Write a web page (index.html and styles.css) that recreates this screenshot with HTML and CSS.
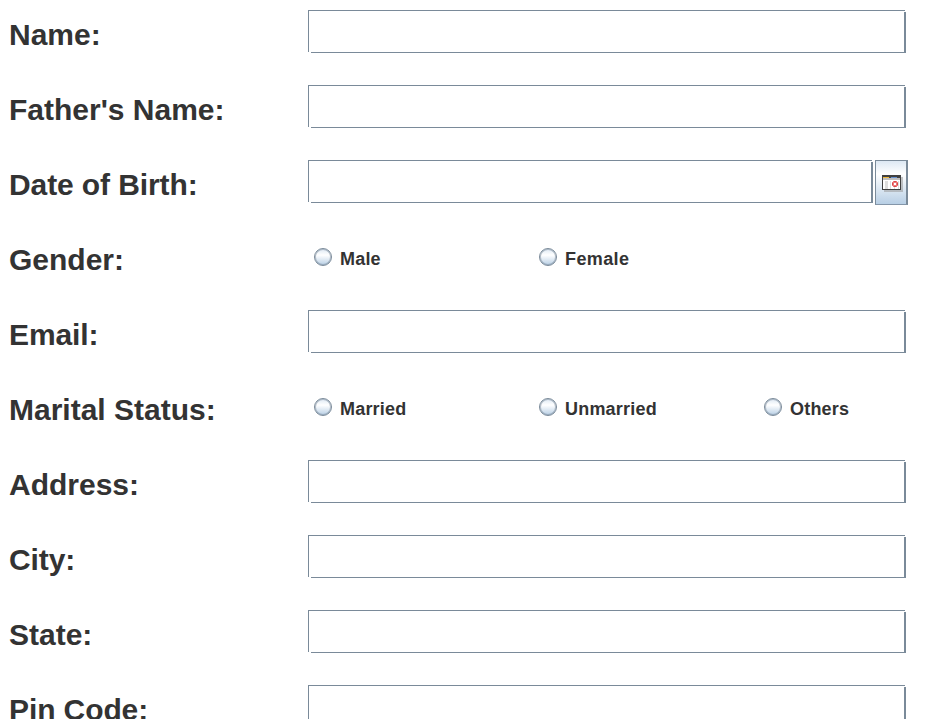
FILE: index.html
```
<!DOCTYPE html>
<html lang="en">
<head>
<meta charset="utf-8">
<title>Form</title>
<link rel="stylesheet" href="styles.css">
</head>
<body>
<form class="form">
<div class="row"><span class="label">Name:</span><div class="field"></div></div>
<div class="row"><span class="label">Father's Name:</span><div class="field"></div></div>
<div class="row"><span class="label tight">Date of Birth:</span><div class="field date"></div>
<button type="button" class="calendar" aria-label="Choose date"><svg width="21" height="17" viewBox="0 0 21 17" shape-rendering="crispEdges"><path d="M2 2H21V17H2Z" fill="#999" opacity=".55"/><path d="M0 0H19V15H0Z" fill="#404040"/><path d="M1 2H18V14H1Z" fill="#fff"/><path d="M1 2H7V3H1Z" fill="#eeb83c"/><path d="M9 2H15V3H9Z" fill="#628ed0"/><path d="M7 2H9V3H7ZM15 2H18V3H15Z" fill="#444"/><path d="M1 3H18V5H1Z" fill="#bebebe"/><path d="M3 6H6V14H3ZM8 6H9V14H8ZM12 6H13V14H12ZM16 6H17V14H16Z" fill="#dedede"/><path d="M11 6H15V7H16V11H15V12H11V11H10V7H11Z" fill="#f07878"/><path d="M12 8H14V10H12Z" fill="#fff"/><path d="M10 8H11V10H10ZM15 8H16V10H15ZM12 6H14V7H12ZM12 11H14V12H12Z" fill="#d94848"/></svg></button></div>
<div class="row"><span class="label">Gender:</span><div class="options"><label class="option"><i class="radio"></i>Male</label><label class="option wide"><i class="radio"></i>Female</label></div></div>
<div class="row"><span class="label tight">Email:</span><div class="field"></div></div>
<div class="row"><span class="label">Marital Status:</span><div class="options"><label class="option"><i class="radio"></i>Married</label><label class="option"><i class="radio"></i>Unmarried</label><label class="option"><i class="radio"></i>Others</label></div></div>
<div class="row"><span class="label">Address:</span><div class="field"></div></div>
<div class="row"><span class="label tight">City:</span><div class="field"></div></div>
<div class="row"><span class="label">State:</span><div class="field"></div></div>
<div class="row"><span class="label tight">Pin Code:</span><div class="field"></div></div>
</form>
</body>
</html>
```
FILE: styles.css
```
* { box-sizing: border-box; }
body { margin: 0; background: #fff; color: #333; font-family: "Liberation Sans", Arial, sans-serif; font-weight: bold; }
.form { height: 719px; padding-top: 10px; overflow: hidden; }
.row { display: flex; height: 75px; align-items: flex-start; }
.label { width: 308px; padding-left: 9px; font-size: 30px; line-height: 49px; flex: none; }
.tight { letter-spacing: -0.1px; }
.field {
  width: 598px; height: 43px; flex: none;
  --line: linear-gradient(#7a8a99, #7a8a99);
  background:
    var(--line) 0 0 / calc(100% - 1px) 1px no-repeat,
    var(--line) 0 0 / 1px calc(100% - 1px) no-repeat,
    var(--line) 100% 100% / 2px calc(100% - 2px) no-repeat,
    var(--line) 100% 100% / calc(100% - 3px) 1px no-repeat;
}
.date { width: 565px; }
.calendar { width: 33px; height: 45px; margin-left: 2px; padding: 14px 0 0 6px; border: 1px solid #7a8a99; border-right-width: 2px; border-bottom-color: #8496a9; background: linear-gradient(#dde8f3, #fff 30%, #b8cfe5); display: flex; align-items: flex-start; }
.calendar svg { flex: none; display: block; }
.options { display: flex; padding-left: 6px; }
.option { width: 225px; display: flex; align-items: flex-start; font-size: 18px; line-height: 48px; letter-spacing: 0.2px; }
.option:nth-child(3) { width: auto; }
.wide { letter-spacing: 0.4px; }
.radio { width: 18px; height: 18px; margin: 13px 8px 0 0; border: 1px solid #7a8a99; box-shadow: inset 0 0 0 1px rgba(122, 138, 153, .5); border-radius: 50%; background: linear-gradient(#dde8f3, #fff 38%, #b8cfe5); flex: none; }
```
